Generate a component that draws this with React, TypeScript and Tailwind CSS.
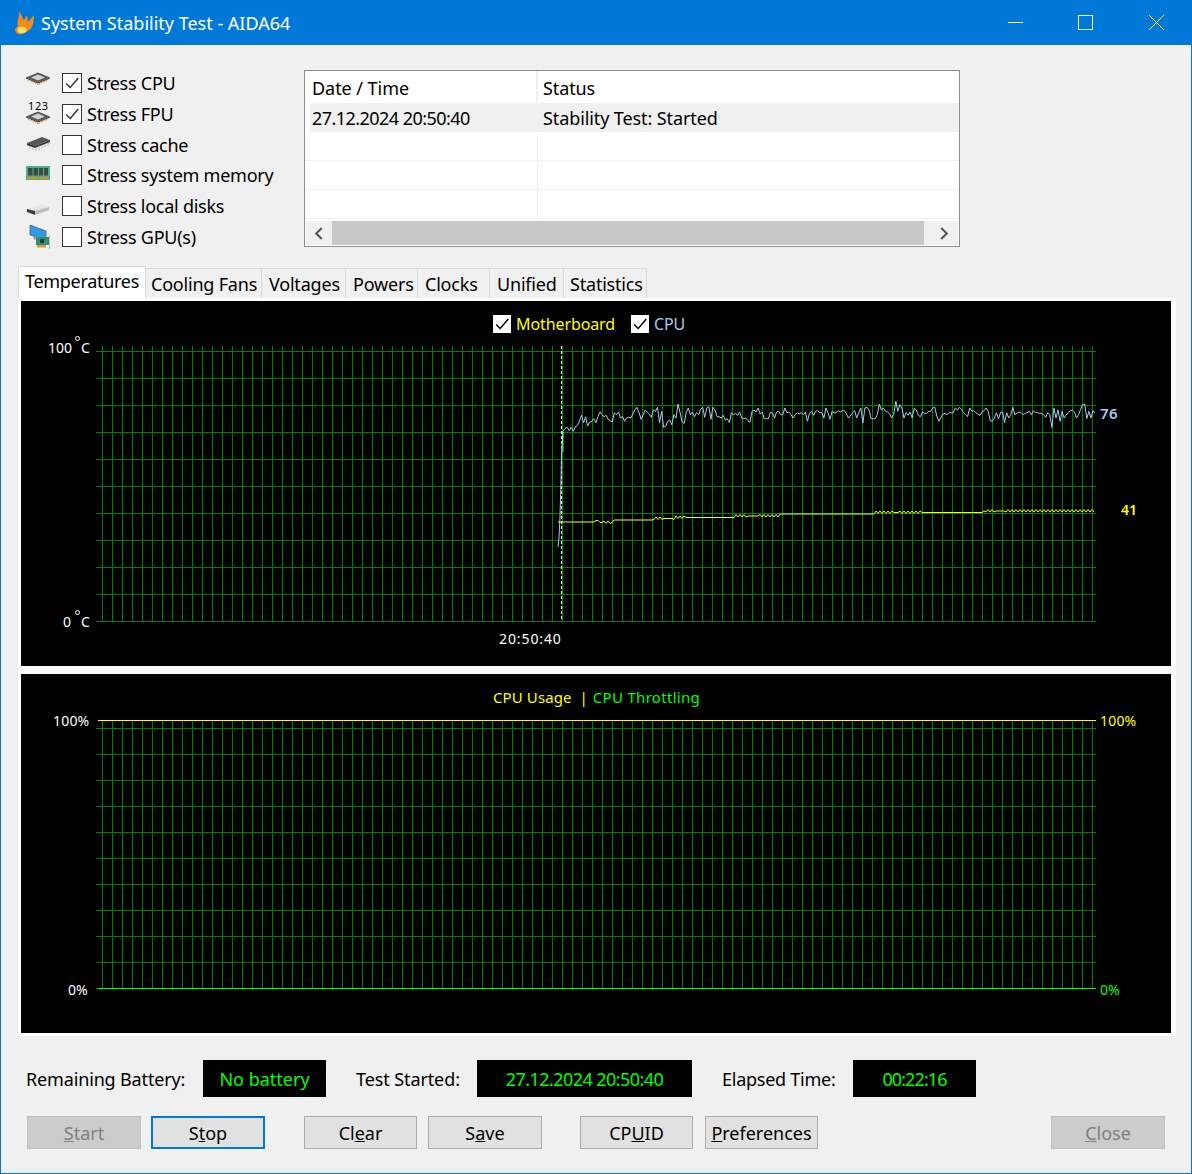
import React from "react";

const cpuTrace = [100,92,88,98,88,100,86,82,70,52,74,56,84,72,70,62,74,56,42,50,56,52,64,68,72,44,50,42,60,56,70,60,58,60,48,36,28,44,64,52,36,42,48,58,36,40,28,74,40,88,84,70,66,80,50,60,18,44,72,76,44,30,50,42,56,44,50,34,28,58,30,26,64,28,36,56,56,60,52,66,62,74,44,50,46,52,42,60,62,60,68,72,40,36,42,30,48,42,62,62,62,42,46,60,42,40,50,50,30,44,42,50,60,50,44,48,44,50,42,70,46,40,52,40,38,44,44,60,30,44,64,40,44,44,38,42,38,38,48,60,52,44,38,60,44,30,75,30,28,36,62,62,62,50,18,36,30,40,42,48,60,50,10,40,20,30,60,44,52,42,60,30,36,52,56,42,46,46,40,40,30,28,54,70,58,48,46,50,44,44,44,30,36,28,34,44,50,56,30,40,38,44,48,52,42,38,30,40,68,70,60,44,62,44,42,74,44,60,50,28,50,46,42,44,50,46,44,40,50,38,44,44,46,46,50,58,44,50,88,30,60,36,70,40,60,50,44,38,36,42,60,50,34,20,18,62,40,60,38,44];

const cpuStep = (1095 - 563) / (cpuTrace.length - 1);
const cpuPoints =
  "558,547 559,537 560,517 561,480 561.5,453 563,432 " +
  cpuTrace.map((v, i) => `${(563 + i * cpuStep).toFixed(1)},${(398 + v / 3).toFixed(1)}`).join(" ");

// motherboard temperature creeps up in small steps with a few wobbles
const yellowSteps: [number, number][] = [[558, 522], [596, 520.5], [600, 522.5], [613, 520], [654, 518.5], [676, 517.5], [735, 516], [780, 514], [876, 512.5], [985, 511]];
const wobbles: [number, number][] = [[604, 610], [654, 662], [674, 684], [736, 746], [760, 778], [876, 892], [900, 920], [983, 994], [1005, 1095]];
const yellowPoints = (() => {
  const pts: string[] = [];
  for (let x = 558; x <= 1095; x += 2) {
    let y = yellowSteps[0][1];
    for (const [sx, sy] of yellowSteps) if (x >= sx) y = sy;
    const w = wobbles.some(([a, b]) => x >= a && x <= b);
    if (w) y += x % 4 === 0 ? -1.5 : 1;
    pts.push(`${x},${y}`);
  }
  return pts.join(" ");
})();

const Check = ({ className }: { className: string }) => (
  <svg viewBox="0 0 20 20" className={className} fill="none" stroke="currentColor" strokeWidth="1.6">
    <path d="M3.5 10.5 L8 15 L17 4.5" />
  </svg>
);

const ChipBody = () => (
  <g>
    <path d="M0 5.5 L12 0.5 L24 5.5 L12 10.5 Z" fill="#55595b" />
    <path d="M0 5.5 L12 10.5 L24 5.5 L24 6.5 L12 11.5 L0 6.5 Z" fill="#2c2e30" />
    <path d="M5 5.5 L12 2.5 L19 5.5 L12 8.5 Z" fill="#cfd3d6" />
    <path d="M2 8 L12 12.5 L22 8" stroke="#e08a26" strokeWidth="1.3" strokeDasharray="1 1" fill="none" />
  </g>
);

const stressItems = [
  {
    label: "Stress CPU",
    checked: true,
    icon: (
      <svg viewBox="0 0 24 14" className="w-6 h-[14px] block mb-[9px]">
        <ChipBody />
      </svg>
    ),
  },
  {
    label: "Stress FPU",
    checked: true,
    icon: (
      <div className="relative w-6 h-[26px]">
        <span className="absolute left-[2px] top-[-2px] text-[11px] leading-[14px] tracking-[0.6px] text-black">
          123
        </span>
        <svg viewBox="0 0 24 14" className="absolute left-0 top-[10px] w-6 h-[14px]">
          <ChipBody />
        </svg>
      </div>
    ),
  },
  {
    label: "Stress cache",
    checked: false,
    icon: (
      <svg viewBox="0 0 24 16" className="w-6 h-4 block mb-1">
        <path d="M1 8 L16 2 L24 5 L9 11 Z" fill="#55585a" />
        <path d="M1 8 L9 11 L9 13 L1 10 Z" fill="#2b2b2b" />
        <path d="M9 11 L24 5 L24 7 L9 13 Z" fill="#3a3c3e" />
        <path d="M4 11 V14 M7 12 V15 M10 13 V16 M13 12 V15 M16 10 V13 M19 9 V12 M22 8 V11" stroke="#b5b8ba" strokeWidth="1" />
      </svg>
    ),
  },
  {
    label: "Stress system memory",
    checked: false,
    icon: (
      <svg viewBox="0 0 24 16" className="w-6 h-4 block mb-[2px]">
        <rect x="0" y="0" width="24" height="14" fill="#4fae8c" />
        <rect x="2" y="2" width="4.5" height="7.5" fill="#3d4a45" />
        <rect x="7.5" y="2" width="4.5" height="7.5" fill="#3d4a45" />
        <rect x="13" y="2" width="4" height="7.5" fill="#3d4a45" />
        <rect x="18" y="2" width="4" height="7.5" fill="#3d4a45" />
        <rect x="2" y="11" width="9" height="2.5" fill="#d98a2b" />
        <rect x="13" y="11" width="9" height="2.5" fill="#d98a2b" />
      </svg>
    ),
  },
  {
    label: "Stress local disks",
    checked: false,
    icon: (
      <svg viewBox="0 0 24 14" className="w-6 h-[14px] block mt-[6px]">
        <path d="M1 7 L16 2 L23 5 L9 9 Z" fill="#e6e6e6" />
        <path d="M1 7 L9 9 L9 13 L1 10 Z" fill="#3d3d3d" />
        <path d="M9 9 L23 5 L23 8 L9 13 Z" fill="#bdbdbd" />
      </svg>
    ),
  },
  {
    label: "Stress GPU(s)",
    checked: false,
    icon: (
      <svg viewBox="0 0 24 24" className="w-6 h-6 block">
        <path d="M4 0 L20 6 L20 15 L4 10 Z" fill="#2f9be8" stroke="#56606a" strokeWidth="0.8" />
        <path d="M7 11 L13 14 L8 15 Z" fill="#9aa3aa" />
        <rect x="10" y="12" width="13" height="8" fill="#2f8f72" />
        <rect x="14" y="14" width="4" height="4" fill="#1d3a36" />
        <rect x="11" y="20" width="9" height="2.5" fill="#e5932c" />
        <path d="M24 10 V24" stroke="#7d8a90" strokeWidth="1" />
      </svg>
    ),
  },
];

const tabs = [
  { label: "Cooling Fans", cls: "w-[116px] pl-[5px]" },
  { label: "Voltages", cls: "w-[84px] pl-[7px]" },
  { label: "Powers", cls: "w-[72px] pl-[7px]" },
  { label: "Clocks", cls: "w-[72px] pl-[7px]" },
  { label: "Unified", cls: "w-[74px] pl-[7px]" },
  { label: "Statistics", cls: "w-[83px] pl-[6px]" },
];

const verticals: number[] = [];
for (let x = 102; x <= 1092; x += 10) verticals.push(x);

const Grid = ({ top, bottom, rows, left }: { top: number; bottom: number; rows: number[]; left: number }) => (
  <g stroke="#008000" strokeWidth="1" shapeRendering="crispEdges">
    {verticals.map((x) => (
      <line key={x} x1={x + 0.5} x2={x + 0.5} y1={top} y2={bottom} />
    ))}
    {rows.map((y) => (
      <line key={y} x1={left} x2={1096} y1={y + 0.5} y2={y + 0.5} />
    ))}
  </g>
);

const tempRows = [351, 378, 405, 432, 459, 486, 513, 540, 567, 594, 621];
const usageRows = [728, 754, 780, 806, 832, 858, 884, 910, 936, 962];

const Btn = ({ w, children, variant }: { w: string; children: React.ReactNode; variant?: "off" | "focus" }) => {
  let look = "border border-[#adadad] bg-[#e1e1e1] text-black";
  if (variant === "off") look = "border border-[#bfbfbf] bg-[#cccccc] text-[#808080]";
  if (variant === "focus") look = "border-2 border-[#0078d7] bg-[#e1e1e1] text-black";
  return <div className={`${w} h-[33px] flex items-center justify-center text-[18px] leading-none ${look}`}>{children}</div>;
};

const Readout = ({ w, children, className }: { w: string; children: React.ReactNode; className?: string }) => (
  <div className={`${w} h-[37px] pt-[2px] bg-black text-[#00ff00] text-[18px] flex items-center justify-center ${className ?? ""}`}>{children}</div>
);

export default function App() {
  return (
    <div className="w-[1192px] h-[1174px] flex flex-col bg-[#f0f0f0] border-x border-b border-[#0078d7] font-['Noto_Sans',sans-serif] text-black overflow-hidden">
      {/* title bar */}
      <div className="h-[45px] shrink-0 bg-[#0078d7] flex items-center text-white -mx-px">
        <svg viewBox="14 10 23 26" className="w-[23px] h-[26px] ml-[14px] mr-[4px]">
          <path d="M19 11 L24 20 L27 15 L28 22 L34 15 C34 22 33 28 28 31 L22 34 C18 35 15 33 15 29 L18 26 C16 22 20 17 19 11 Z" fill="#f28a1e" />
          <ellipse cx="22" cy="30" rx="4.5" ry="3.2" fill="#fbe05a" />
        </svg>
        <span className="text-[18px] leading-none">System Stability Test - AIDA64</span>
        <div className="ml-auto flex items-center">
          <div className="w-[15px] h-px bg-white mr-[55px]" />
          <div className="w-[15px] h-[15px] border border-white mr-[56px]" />
          <svg viewBox="0 0 15 15" className="w-[15px] h-[15px] mr-[28px]" stroke="white" strokeWidth="1">
            <path d="M0 0 L15 15 M15 0 L0 15" />
          </svg>
        </div>
      </div>

      {/* stress options and log */}
      <div className="h-[221px] shrink-0 flex pl-[25px] pt-[25px]">
        <div className="w-[278px] flex flex-col -mt-[2px]">
          {stressItems.map((item) => (
            <div key={item.label} className="h-[30.67px] flex items-center">
              <div className="w-[24px] mr-[12px] flex items-center justify-center">{item.icon}</div>
              <div className="w-5 h-5 border border-[#333333] bg-white text-[#333333] mr-[5px] shrink-0">
                {item.checked && <Check className="w-full h-full" />}
              </div>
              <span className="text-[18px] leading-none whitespace-nowrap tracking-[-0.25px]">{item.label}</span>
            </div>
          ))}
        </div>
        <div className="w-[656px] h-[177px] border border-[#8e8e9a] bg-white flex flex-col">
          <div className="h-[32px] flex items-center text-[18px]">
            <div className="w-[233px] h-full pl-[7px] pt-[3px] flex items-center border-r-2 border-[#f0f0f0] tracking-[-0.05px]">Date / Time</div>
            <div className="pl-[5px] pt-[3px] tracking-[-0.1px]">Status</div>
          </div>
          <div className="h-[29px] ml-[5px] bg-[#f0f0f0] flex items-center text-[18px] pt-px">
            <div className="w-[233px] pl-[2px] tracking-[-0.55px]">27.12.2024 20:50:40</div>
            <div className="tracking-[-0.1px]">Stability Test: Started</div>
          </div>
          {[0, 1, 2].map((r) => (
            <div key={r} className="h-[29px] flex border-b border-[#f0f0f0]">
              <div className="w-[233px] border-r border-[#f0f0f0]" />
            </div>
          ))}
          <div className="h-[25px] flex items-stretch bg-[#f0f0f0] mx-px mb-px border-t border-white mt-auto">
            <div className="w-[26px] flex items-center justify-center">
              <svg viewBox="0 0 10 14" className="w-[10px] h-[13px]" fill="none" stroke="#555555" strokeWidth="2.2">
                <path d="M8 1 L2 7 L8 13" />
              </svg>
            </div>
            <div className="w-[592px] bg-[#c8c8c8]" />
            <div className="flex-1 flex items-center justify-center pl-[6px]">
              <svg viewBox="0 0 10 14" className="w-[10px] h-[13px]" fill="none" stroke="#555555" strokeWidth="2.2">
                <path d="M2 1 L8 7 L2 13" />
              </svg>
            </div>
          </div>
        </div>
      </div>

      {/* tab strip */}
      <div className="h-[32px] shrink-0 flex items-end pl-[17px]">
        <div className="w-[128px] h-[32px] bg-white border-x border-t border-[#d9d9d9] text-[18px] leading-none flex items-start pt-[5px] justify-center tracking-[-0.3px]">
          Temperatures
        </div>
        {tabs.map((t) => (
          <div key={t.label} className={`${t.cls} h-[30px] pt-px border-r border-t border-[#d9d9d9] text-[18px] leading-none flex items-center tracking-[-0.2px]`}>
            {t.label}
          </div>
        ))}
      </div>

      {/* tab page with the two graphs */}
      <div className="w-[1158px] h-[738px] ml-[17px] shrink-0 bg-white pl-[3px] pt-[3px] flex flex-col gap-[8px]">
        <div className="relative w-[1150px] h-[365px] bg-black">
          <svg viewBox="21 301 1150 365" className="absolute inset-0 w-full h-full">
            <Grid top={346} bottom={621} rows={tempRows} left={96} />
            <polyline points="563,432 563,452" stroke="#40ff40" strokeWidth="1" fill="none" />
            <line x1="561.5" x2="561.5" y1="346" y2="621" stroke="white" strokeWidth="1" strokeDasharray="3 2" />
            <polyline points={cpuPoints} stroke="#a6caf0" strokeWidth="1" fill="none" />
            <polyline points={yellowPoints} stroke="#ffff00" strokeWidth="1" fill="none" />
          </svg>

          <div className="absolute left-[472px] top-[14px] flex items-center text-[16px] leading-none">
            <div className="w-[18px] h-[18px] bg-white text-black mr-[5px]">
              <Check className="w-full h-full" />
            </div>
            <span className="text-[#ffff00] w-[115px] tracking-[-0.1px]">Motherboard</span>
            <div className="w-[18px] h-[18px] bg-white text-black mr-[5px]">
              <Check className="w-full h-full" />
            </div>
            <span className="text-[#a6caf0] tracking-[-0.2px]">CPU</span>
          </div>

          <span className="absolute left-[27px] top-[40px] text-white text-[14px] leading-none">100</span>
          <span className="absolute left-[54px] top-[35px] w-[5px] h-[5px] rounded-full border border-white" />
          <span className="absolute left-[60px] top-[40px] text-white text-[14px] leading-none">C</span>
          <span className="absolute left-[42px] top-[314px] text-white text-[14px] leading-none">0</span>
          <span className="absolute left-[54px] top-[309px] w-[5px] h-[5px] rounded-full border border-white" />
          <span className="absolute left-[60px] top-[314px] text-white text-[14px] leading-none">C</span>
          <span className="absolute left-[478px] top-[331px] text-white text-[14px] leading-none tracking-[0.9px]">20:50:40</span>
          <span className="absolute left-[1079px] top-[105px] text-[#a6caf0] text-[15px] leading-none font-semibold tracking-[0.5px]">76</span>
          <span className="absolute left-[1100px] top-[202px] text-[#ffff00] text-[14px] leading-none font-semibold">41</span>
        </div>

        <div className="relative w-[1150px] h-[359px] bg-black">
          <svg viewBox="21 674 1150 359" className="absolute inset-0 w-full h-full">
            <Grid top={720} bottom={988} rows={usageRows} left={96} />
            <g shapeRendering="crispEdges" strokeWidth="1">
              <line x1="98" x2="1096" y1="720.5" y2="720.5" stroke="#ffff00" />
              <line x1="96" x2="98" y1="988.5" y2="988.5" stroke="#008000" />
              <line x1="98" x2="1096" y1="988.5" y2="988.5" stroke="#00ff00" />
            </g>
          </svg>

          <div className="absolute left-[472px] top-[16px] flex items-center text-[15px] leading-none">
            <span className="text-[#ffff00] tracking-[0.1px]">CPU Usage</span>
            <span className="text-[#ffff00] ml-[8px] mr-[5px]">|</span>
            <span className="text-[#00ff00] tracking-[0.3px]">CPU Throttling</span>
          </div>

          <span className="absolute left-[32px] top-[40px] text-white text-[14px] leading-none tracking-[0.2px]">100%</span>
          <span className="absolute left-[47px] top-[309px] text-white text-[14px] leading-none">0%</span>
          <span className="absolute left-[1079px] top-[40px] text-[#ffff00] text-[14px] leading-none tracking-[0.2px]">100%</span>
          <span className="absolute left-[1079px] top-[309px] text-[#00ff00] text-[14px] leading-none">0%</span>
        </div>
      </div>

      {/* battery and timers */}
      <div className="h-[37px] shrink-0 mt-[24px] flex items-center text-[18px] pl-[25px]">
        <span className="w-[177px] pt-[2px] tracking-[-0.15px]">Remaining Battery:</span>
        <Readout w="w-[123px]">No battery</Readout>
        <span className="w-[151px] pt-[2px] pl-[30px] tracking-[-0.1px]">Test Started:</span>
        <Readout w="w-[215px]" className="tracking-[-0.55px]">27.12.2024 20:50:40</Readout>
        <span className="w-[161px] pt-[2px] pl-[30px] tracking-[-0.25px]">Elapsed Time:</span>
        <Readout w="w-[123px]" className="tracking-[-0.9px]">00:22:16</Readout>
      </div>

      {/* buttons */}
      <div className="h-[33px] shrink-0 mt-[19px] flex pl-[26px]">
        <Btn w="w-[114px]" variant="off"><u>S</u>tart</Btn>
        <div className="w-[10px]" />
        <Btn w="w-[114px]" variant="focus">S<u>t</u>op</Btn>
        <div className="w-[39px]" />
        <Btn w="w-[113px]">Cl<u>e</u>ar</Btn>
        <div className="w-[11px]" />
        <Btn w="w-[114px]">S<u>a</u>ve</Btn>
        <div className="w-[38px]" />
        <Btn w="w-[113px]">CP<u>U</u>ID</Btn>
        <div className="w-[12px]" />
        <Btn w="w-[113px]"><u>P</u>references</Btn>
        <div className="w-[233px]" />
        <Btn w="w-[114px]" variant="off"><u>C</u>lose</Btn>
      </div>
    </div>
  );
}
